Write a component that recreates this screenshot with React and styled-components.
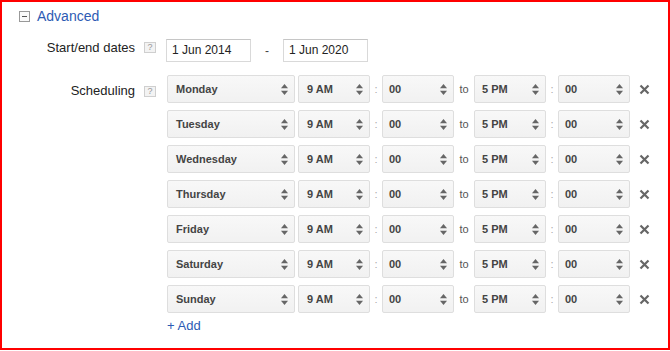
import styled, { createGlobalStyle } from "styled-components";

const GlobalStyle = createGlobalStyle`
  html, body {
    margin: 0;
    padding: 0;
    background: #fff;
  }
  body {
    font-family: "Liberation Sans", Arial, sans-serif;
    color: #222;
  }
`;

const Frame = styled.div`
  box-sizing: border-box;
  width: 670px;
  height: 350px;
  border: 2px solid #f00;
  padding: 6px 0 0 17px;
  display: flex;
  flex-direction: column;
`;

const Header = styled.div`
  display: flex;
  align-items: center;
  gap: 7px;
  height: 16px;
`;

const Toggle = styled.span`
  box-sizing: border-box;
  width: 11px;
  height: 11px;
  border: 1px solid #999;
  background: #fafafa;
  display: flex;
  align-items: center;
  justify-content: center;
  margin-top: 1px;

  &::before {
    content: "";
    width: 5px;
    height: 1px;
    background: #555;
  }
`;

const HeaderLink = styled.span`
  font-size: 14px;
  line-height: 16px;
  color: #2d5bb4;
`;

const FieldRow = styled.div`
  display: flex;
  align-items: flex-start;
  margin-top: ${p => p.$top}px;
`;

const Label = styled.div`
  width: 116px;
  text-align: right;
  font-size: 13px;
  line-height: 15px;
  color: #222;
  padding-top: ${p => p.$offset}px;
`;

const Help = styled.span`
  box-sizing: border-box;
  width: 12px;
  height: 11px;
  margin: ${p => p.$offset}px 0 0 9px;
  border: 1px solid #cfcfcf;
  background: #f3f3f3;
  color: #999;
  font-size: 9px;
  line-height: 9px;
  text-align: center;
  flex: none;
`;

const Content = styled.div`
  margin-left: ${p => p.$indent}px;
  display: flex;
  flex-direction: column;
`;

const DateLine = styled.div`
  display: flex;
  align-items: center;
`;

const DateInput = styled.div`
  box-sizing: border-box;
  width: 85px;
  height: 23px;
  border: 1px solid #d9d9d9;
  border-top-color: #c6c6c6;
  padding-left: 5px;
  font-size: 12px;
  line-height: 21px;
  color: #222;
`;

const Dash = styled.span`
  width: 32px;
  text-align: center;
  font-size: 12px;
  color: #444;
`;

const ScheduleList = styled.div`
  display: flex;
  flex-direction: column;
  gap: 7px;
`;

const ScheduleRow = styled.div`
  display: flex;
  align-items: center;
  height: 28px;
`;

const Select = styled.div`
  box-sizing: border-box;
  width: ${p => p.$w}px;
  height: 28px;
  border: 1px solid #dedede;
  border-radius: 2px;
  background: linear-gradient(#f8f8f8, #f1f1f1);
  display: flex;
  align-items: center;
  justify-content: space-between;
  padding: 0 6px 0 ${p => p.$pad}px;
  font-size: 11px;
  font-weight: bold;
  color: #444;
`;

const Sep = styled.span`
  width: ${p => p.$w}px;
  text-align: center;
  font-size: ${p => p.$size}px;
  color: ${p => p.$color};
`;

const Remove = styled.span`
  margin-left: 9px;
  display: flex;
  align-items: center;
`;

const AddLink = styled.div`
  margin-top: 5px;
  font-size: 13px;
  line-height: 15px;
  color: #2d5bb4;
`;

function Arrows() {
  return (
    <svg width="7" height="11" viewBox="0 0 7 11">
      <polygon points="3.5,0 7,4.3 0,4.3" fill="#666" />
      <polygon points="0,6.7 7,6.7 3.5,11" fill="#666" />
    </svg>
  );
}

function Cross() {
  return (
    <svg width="11" height="11" viewBox="0 0 11 11">
      <path d="M1.5 1.5 L9.5 9.5 M9.5 1.5 L1.5 9.5" stroke="#666" strokeWidth="2.2" />
    </svg>
  );
}

function Dropdown({ width, pad = 7, value }) {
  return (
    <Select $w={width} $pad={pad}>
      <span>{value}</span>
      <Arrows />
    </Select>
  );
}

const days = ["Monday", "Tuesday", "Wednesday", "Thursday", "Friday", "Saturday", "Sunday"];

export default function App() {
  return (
    <>
      <GlobalStyle />
      <Frame>
        <Header>
          <Toggle />
          <HeaderLink>Advanced</HeaderLink>
        </Header>

        <FieldRow $top={15}>
          <Label $offset={1}>Start/end dates</Label>
          <Help $offset={3}>?</Help>
          <Content $indent={10}>
            <DateLine>
              <DateInput>1 Jun 2014</DateInput>
              <Dash>-</Dash>
              <DateInput>1 Jun 2020</DateInput>
            </DateLine>
          </Content>
        </FieldRow>

        <FieldRow $top={13}>
          <Label $offset={8}>Scheduling</Label>
          <Help $offset={11}>?</Help>
          <Content $indent={11}>
            <ScheduleList>
              {days.map(day => (
                <ScheduleRow key={day}>
                  <Dropdown width={128} pad={8} value={day} />
                  <Sep $w={3} />
                  <Dropdown width={72} pad={8} value="9 AM" />
                  <Sep $w={12} $size={11} $color="#aaa">:</Sep>
                  <Dropdown width={72} pad={6} value="00" />
                  <Sep $w={20} $size={11} $color="#555">to</Sep>
                  <Dropdown width={72} pad={7} value="5 PM" />
                  <Sep $w={12} $size={11} $color="#aaa">:</Sep>
                  <Dropdown width={72} pad={6} value="00" />
                  <Remove><Cross /></Remove>
                </ScheduleRow>
              ))}
            </ScheduleList>
            <AddLink>+ Add</AddLink>
          </Content>
        </FieldRow>
      </Frame>
    </>
  );
}
